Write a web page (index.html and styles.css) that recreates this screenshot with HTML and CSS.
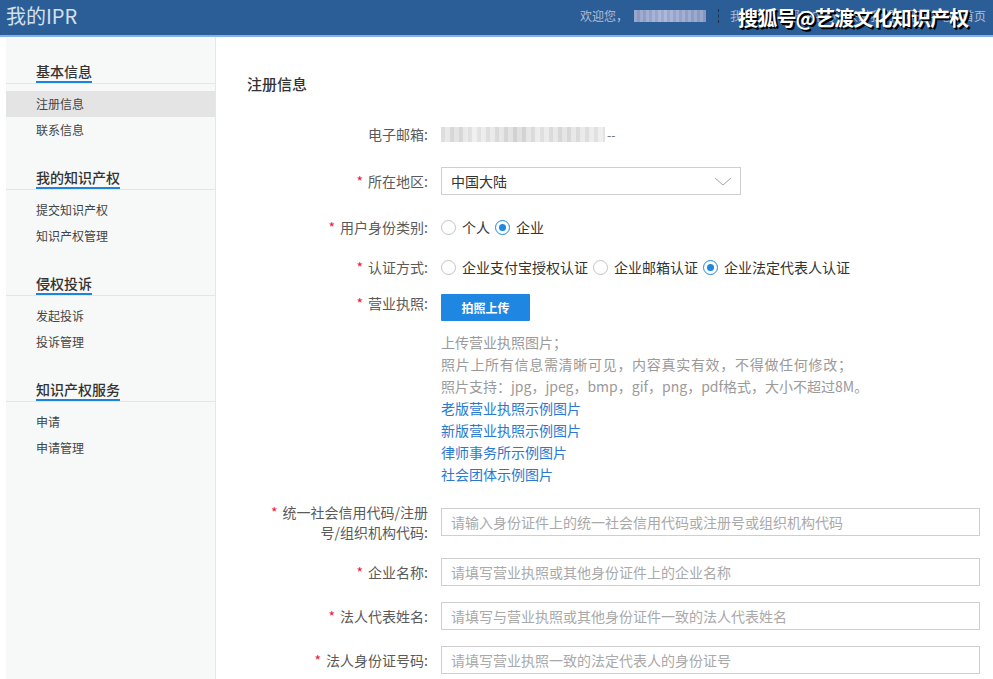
FILE: index.html
```html
<!DOCTYPE html>
<html lang="zh-CN">
<head>
<meta charset="utf-8">
<title>我的IPR</title>
<link rel="stylesheet" href="styles.css">
</head>
<body>
<header class="topbar">
  <div class="logo">我的IPR</div>
  <div class="top-right">
    <span class="welcome">欢迎您，</span>
    <span class="blur-name"></span>
    <span class="sep"></span>
    <span class="top-link">我的账户</span>
    <span class="top-link">帮助中心</span>
    <span class="top-link">联系我们</span>
    <span class="top-link">规则中心</span>
    <span class="top-link">首页</span>
  </div>
  <div class="watermark">搜狐号@艺渡文化知识产权</div>
</header>
<div class="layout">
  <aside class="sidebar">
    <div class="nav-group">
      <div class="nav-title"><span>基本信息</span></div>
      <div class="nav-item active">注册信息</div>
      <div class="nav-item">联系信息</div>
    </div>
    <div class="nav-group">
      <div class="nav-title"><span>我的知识产权</span></div>
      <div class="nav-item">提交知识产权</div>
      <div class="nav-item">知识产权管理</div>
    </div>
    <div class="nav-group">
      <div class="nav-title"><span>侵权投诉</span></div>
      <div class="nav-item">发起投诉</div>
      <div class="nav-item">投诉管理</div>
    </div>
    <div class="nav-group">
      <div class="nav-title"><span>知识产权服务</span></div>
      <div class="nav-item">申请</div>
      <div class="nav-item">申请管理</div>
    </div>
  </aside>
  <main class="main">
    <h1 class="page-title">注册信息</h1>
    <div class="form">
      <div class="row row-email">
        <div class="label">电子邮箱:</div>
        <div class="field"><span class="blur-email"></span><span class="dash">--</span></div>
      </div>
      <div class="row row-region">
        <div class="label"><i class="req">*</i>所在地区:</div>
        <div class="field">
          <div class="select">
            <span>中国大陆</span>
            <svg class="chev" width="18" height="9" viewBox="0 0 18 9"><path d="M1 1 L9 8 L17 1" fill="none" stroke="#a6a6a6" stroke-width="1"/></svg>
          </div>
        </div>
      </div>
      <div class="row row-type">
        <div class="label"><i class="req">*</i>用户身份类别:</div>
        <div class="field radios">
          <span class="radio"></span><span class="rtext">个人</span>
          <span class="radio checked"></span><span class="rtext">企业</span>
        </div>
      </div>
      <div class="row row-auth">
        <div class="label"><i class="req">*</i>认证方式:</div>
        <div class="field radios">
          <span class="radio"></span><span class="rtext">企业支付宝授权认证</span>
          <span class="radio"></span><span class="rtext">企业邮箱认证</span>
          <span class="radio checked"></span><span class="rtext">企业法定代表人认证</span>
        </div>
      </div>
      <div class="row row-license">
        <div class="label"><i class="req">*</i>营业执照:</div>
        <div class="field field-col">
          <button class="btn">拍照上传</button>
          <div class="help">
            <p>上传营业执照图片；</p>
            <p class="wide">照片上所有信息需清晰可见，内容真实有效，不得做任何修改；</p>
            <p>照片支持：jpg，jpeg，bmp，gif，png，pdf格式，大小不超过8M。</p>
            <a class="link">老版营业执照示例图片</a>
            <a class="link">新版营业执照示例图片</a>
            <a class="link">律师事务所示例图片</a>
            <a class="link">社会团体示例图片</a>
          </div>
        </div>
      </div>
      <div class="row row-code">
        <div class="label"><i class="req">*</i>统一社会信用代码/注册号/组织机构代码:</div>
        <div class="field"><div class="input">请输入身份证件上的统一社会信用代码或注册号或组织机构代码</div></div>
      </div>
      <div class="row row-input">
        <div class="label"><i class="req">*</i>企业名称:</div>
        <div class="field"><div class="input">请填写营业执照或其他身份证件上的企业名称</div></div>
      </div>
      <div class="row row-input">
        <div class="label"><i class="req">*</i>法人代表姓名:</div>
        <div class="field"><div class="input">请填写与营业执照或其他身份证件一致的法人代表姓名</div></div>
      </div>
      <div class="row row-input">
        <div class="label"><i class="req">*</i>法人身份证号码:</div>
        <div class="field"><div class="input">请填写营业执照一致的法定代表人的身份证号</div></div>
      </div>
    </div>
  </main>
</div>
</body>
</html>
```
FILE: styles.css
```css
* { box-sizing: border-box; }
html, body { margin: 0; padding: 0; }
body {
  font-family: "Noto Sans CJK SC", "Noto Sans", sans-serif;
  color: #333;
  background: #fff;
  width: 993px;
  height: 679px;
  overflow: hidden;
}
.topbar {
  position: relative;
  height: 37px;
  background: #2b5e96;
  border-bottom: 2px solid #86b2df;
  display: flex;
  align-items: center;
  justify-content: space-between;
  padding: 0 7px 0 6px;
}
.logo {
  font-size: 20px;
  line-height: 30px;
  color: #d3e0ef;
  margin-top: -3px;
}
.top-right {
  display: flex;
  align-items: center;
  font-size: 12px;
  color: #aebfd6;
  margin-top: -4px;
}
.welcome { margin-right: 6px; }
.blur-name {
  display: inline-block;
  width: 72px;
  height: 12px;
  background:
    repeating-linear-gradient(90deg, rgba(255,255,255,0.08) 0 3px, rgba(0,0,0,0.05) 3px 6px),
    linear-gradient(90deg, #8f9fc8, #a7b4d8 40%, #9aa8cf 70%, #8e9ec7);
  margin-right: 12px;
}
.sep {
  display: inline-block;
  width: 1px;
  height: 14px;
  border-left: 1px dashed #1c2f48;
  margin-right: 11px;
}
.top-link { margin-right: 10px; color: #aebfd6; }
.top-link:last-child { margin-right: 0; }
.watermark {
  position: absolute;
  left: 738px;
  top: 4px;
  font-size: 20px;
  line-height: 28px;
  font-weight: 700;
  color: #fff;
  text-shadow: 2px 2px 0 #000, 1px 1px 0 #000;
  letter-spacing: -0.8px;
}
.layout {
  display: flex;
  height: 642px;
  padding-left: 6px;
}
.sidebar {
  width: 210px;
  flex: none;
  background: #f7f8f8;
  border-right: 1px solid #e6e6e6;
}
.nav-group { padding-top: 24px; }
.nav-title {
  display: flex;
  align-items: flex-end;
  padding-left: 30px;
  border-bottom: 1px solid #e3e5e7;
  height: 23px;
}
.nav-title span {
  display: block;
  font-size: 14px;
  line-height: 20px;
  font-weight: 500;
  color: #333;
  border-bottom: 2px solid #1d82e0;
}
.nav-item {
  height: 26px;
  line-height: 26px;
  padding-left: 30px;
  font-size: 12px;
  color: #444;
}
.nav-title + .nav-item { margin-top: 7px; }
.nav-item.active { background: #e4e4e4; }
.main {
  flex: 1;
  padding: 36px 13px 0 31px;
}
.page-title {
  margin: 0;
  font-size: 15px;
  line-height: 22px;
  font-weight: 500;
  color: #333;
}
.form {
  margin-left: 19px;
  display: flex;
  flex-direction: column;
}
.row {
  display: flex;
  align-items: center;
  min-height: 28px;
}
.label {
  width: 162px;
  flex: none;
  text-align: right;
  font-size: 14px;
  line-height: 20px;
  color: #5a5a5a;
  margin-right: 13px;
}
.req {
  font-style: normal;
  color: #f0163a;
  margin-right: 5px;
}
.field {
  flex: 1;
  display: flex;
  align-items: center;
  font-size: 14px;
}
.row-email { margin-top: 25px; }
.row-region { margin-top: 19px; }
.row-type { margin-top: 18px; }
.row-auth { margin-top: 12px; }
.row-license { margin-top: 12px; align-items: flex-start; }
.row-code { margin-top: 17px; }
.row-input { margin-top: 16px; }
.blur-email {
  display: inline-block;
  width: 164px;
  height: 15px;
  background:
    repeating-linear-gradient(90deg, rgba(0,0,0,0.03) 0 4px, rgba(255,255,255,0.25) 4px 9px),
    linear-gradient(90deg, #e6e6e6 0, #dadada 10%, #ececec 20%, #e0e0e0 35%, #d6d6d6 48%, #e8e8e8 60%, #dcdcdc 75%, #e4e4e4 88%, #ebebeb 100%);
}
.dash { color: #666; font-size: 12px; margin-left: 2px; line-height: 15px; }
.select {
  width: 300px;
  height: 28px;
  border: 1px solid #cfcfcf;
  display: flex;
  align-items: center;
  justify-content: space-between;
  padding: 0 8px 0 9px;
  color: #333;
}
.radios { color: #333; }
.radio {
  display: inline-block;
  width: 15px;
  height: 15px;
  border: 1px solid #c4c4c4;
  border-radius: 50%;
  background: #fff;
  margin-right: 6px;
  position: relative;
}
.radio.checked { border-color: #1f86e3; }
.radio.checked::after {
  content: "";
  position: absolute;
  left: 3px;
  top: 3px;
  width: 7px;
  height: 7px;
  border-radius: 50%;
  background: #1f86e3;
}
.rtext { margin-right: 5px; line-height: 20px; }
.field-col {
  flex-direction: column;
  align-items: flex-start;
}
.btn {
  margin-top: 1px;
  width: 89px;
  height: 27px;
  border: none;
  border-radius: 1px;
  background: #1f87e2;
  color: #fff;
  font-family: inherit;
  font-size: 12px;
  font-weight: 700;
  padding: 0;
}
.help {
  margin-top: 10px;
  display: flex;
  flex-direction: column;
  font-size: 14px;
  line-height: 22px;
}
.help p { margin: 0; color: #9a9a9a; }
.help p.wide { letter-spacing: 0.7px; }
.link { color: #2a79d0; text-decoration: none; }
.input {
  width: 539px;
  height: 28px;
  border: 1px solid #cfcfcf;
  padding: 0 9px;
  line-height: 26px;
  color: #a9a9a9;
  font-size: 14px;
}
```
